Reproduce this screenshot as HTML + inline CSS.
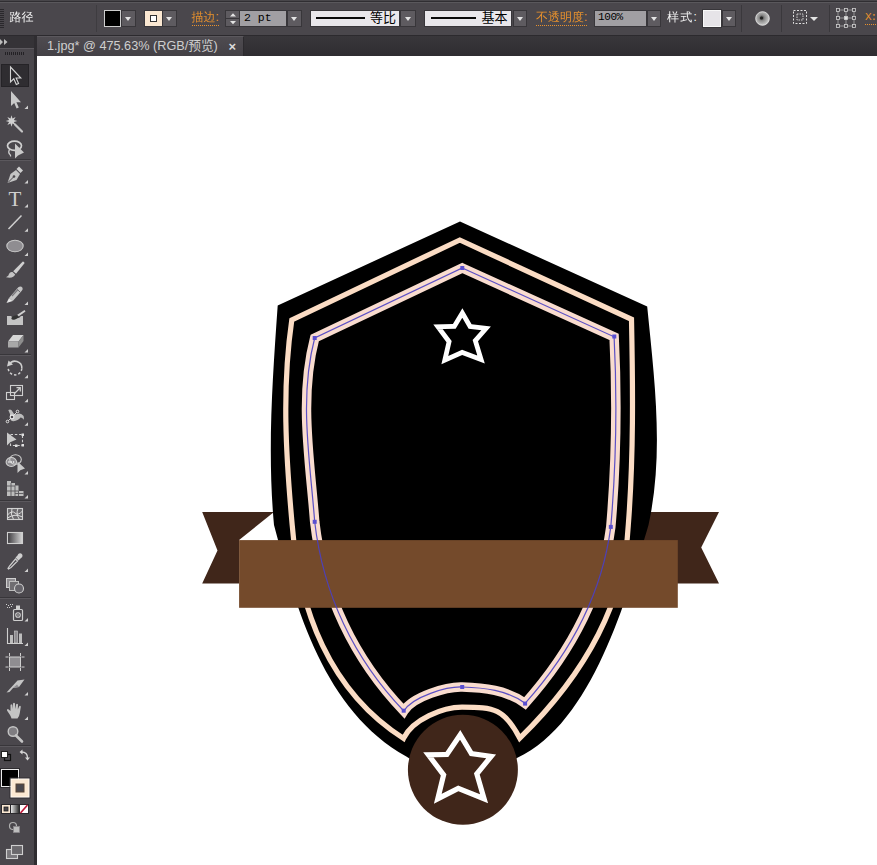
<!DOCTYPE html>
<html lang="zh-CN">
<head>
<meta charset="utf-8">
<title>1.jpg* @ 475.63% (RGB/预览)</title>
<style>
*{box-sizing:border-box;margin:0;padding:0}
html,body{width:877px;height:865px;overflow:hidden;background:#fff}
body{position:relative;font-family:"Liberation Sans","Noto Sans CJK SC",sans-serif;font-size:12px;color:#e6e6e6}
.abs{position:absolute}
#topbar{left:0;top:0;width:877px;height:36px;background:#4a474c;border-top:1px solid #48464a;border-bottom:1px solid #2c2a2e;box-shadow:inset 0 2px 0 -1px transparent}
#topline{left:0;top:1px;width:877px;height:2px;background:linear-gradient(#302e32 0 50%,#5a585c 50% 100%)}
#tabbar{left:36px;top:36px;width:841px;height:20px;background:linear-gradient(#39373b,#2f2d31)}
#tab{left:36px;top:36px;width:208px;height:20px;background:linear-gradient(#4e4b50,#444146);border-top:1px solid #5b585d;border-right:1px solid #2c2a2e;color:#cfcfcf;font-size:12.5px;line-height:19px;white-space:nowrap}
#toolbar{left:0;top:36px;width:34px;height:829px;background:#4a474c}
#toolsep{left:34px;top:36px;width:3px;height:829px;background:#2f2d31}
#toolhead{left:0;top:36px;width:34px;height:12px;background:#353337}
.lbl{position:absolute;white-space:nowrap;line-height:14px;font-family:"Liberation Sans","WenQuanYi Zen Hei",sans-serif}
.or{color:#e8912d}
.dd{position:absolute;background:#5e5b60;border:1px solid #38363a}
.dd:after{content:"";position:absolute;left:50%;top:50%;margin:-2px 0 0 -3.5px;border:3.5px solid transparent;border-top:4px solid #e4e4e4;border-bottom:0}
.box{position:absolute;border:1px solid #2e2c30}
</style>
</head>
<body>
<div id="topbar" class="abs"></div>
<div id="topline" class="abs"></div>
<div id="tabbar" class="abs"></div>
<div id="tab" class="abs"><span class="abs" id="tabtxt" style="left:11px;top:0;font-size:12.7px">1.jpg* @ 475.63% (RGB/预览)</span><span class="abs" style="left:192.500px;top:0px;font-size:13px;font-weight:bold;color:#dcdcdc">×</span></div>
<div class="abs" style="left:0;top:9px;width:4px;height:19px;background:repeating-linear-gradient(#2a282c 0 1px,#4a474c 1px 2px)"></div>
<div class="lbl" id="lujing" style="left:9.5px;top:10px;font-size:12px;color:#f2f2f2">路径</div>
<div class="abs" style="left:96px;top:5px;width:1px;height:27px;background:#3e3c40"></div>
<!-- fill swatch -->
<div class="box" style="left:104px;top:10px;width:17px;height:17px;background:#000;border:1px solid #cfcfcf"></div>
<div class="dd" style="left:121px;top:10px;width:15px;height:17px"></div>
<!-- stroke swatch -->
<div class="box" style="left:144px;top:10px;width:19px;height:17px;background:#fbe8d2;border:1px solid #3a383c"></div>
<div class="abs" style="left:150px;top:15px;width:7px;height:7px;background:#fff;border:1px solid #333"></div>
<div class="dd" style="left:162px;top:10px;width:15px;height:17px"></div>
<div class="lbl or" id="miaobian" style="left:191.5px;top:10px;border-bottom:1px dotted #e8912d;line-height:15px">描边:</div>
<!-- spinner -->
<div class="abs" style="left:225px;top:10px;width:15px;height:17px;background:#5e5b60;border:1px solid #38363a"></div>
<svg class="abs" style="left:225px;top:10px" width="15" height="17"><path d="M1 8.500 H14" stroke="#38363a" stroke-width="1"/><path d="M5 6.500 L8 3.200 L11 6.500Z M5 11 L8 14.300 L11 11Z" fill="#e4e4e4"/></svg>
<div class="abs" style="left:240px;top:10px;width:47px;height:17px;background:#a19fa3;border:1px solid #38363a;border-left:0;color:#000;font-family:'Liberation Mono',monospace;font-size:11.5px;line-height:14.5px;padding-left:4px">2 pt</div>
<div class="dd" style="left:287px;top:10px;width:15px;height:17px"></div>
<!-- profile -->
<div class="abs" style="left:310px;top:10px;width:90px;height:17px;background:#e9e7eb;border:1px solid #38363a"></div>
<div class="abs" style="left:316px;top:16.5px;width:49px;height:2.5px;background:#0a0a0a"></div>
<div class="lbl" style="left:370px;top:11px;color:#000;font-size:13px;font-family:'Liberation Sans','Noto Sans CJK SC',sans-serif">等比</div>
<div class="dd" style="left:400px;top:10px;width:16px;height:17px"></div>
<!-- brush -->
<div class="abs" style="left:424px;top:10px;width:88px;height:17px;background:#e9e7eb;border:1px solid #38363a"></div>
<div class="abs" style="left:431px;top:16.5px;width:45px;height:2.5px;background:#0a0a0a"></div>
<div class="lbl" style="left:481.5px;top:11px;color:#000;font-size:13px;font-family:'Liberation Sans','Noto Sans CJK SC',sans-serif">基本</div>
<div class="dd" style="left:513px;top:10px;width:14px;height:17px"></div>
<div class="lbl or" id="opac" style="left:536px;top:10px;border-bottom:1px dotted #e8912d;line-height:15px">不透明度:</div>
<div class="abs" style="left:594px;top:10px;width:53px;height:17px;background:#a19fa3;border:1px solid #38363a;color:#000;font-family:'Liberation Mono',monospace;font-size:11px;line-height:13.5px;padding-left:3px;letter-spacing:-0.4px">100%</div>
<div class="dd" style="left:647px;top:10px;width:14px;height:17px"></div>
<div class="lbl" id="yangshi" style="left:667px;top:10px;color:#f2f2f2;letter-spacing:1.3px">样式:</div>
<div class="abs" style="left:703px;top:10px;width:18px;height:17px;background:#e6e4e8;border:1px solid #f8f8f8;outline:1px solid #38363a"></div>
<div class="dd" style="left:722px;top:10px;width:14px;height:17px"></div>
<div class="abs" style="left:741px;top:5px;width:1px;height:27px;background:#3a383c"></div>
<svg class="abs" style="left:754px;top:10px" width="17" height="17" viewBox="0 0 17 17"><defs><radialGradient id="gl" cx="0.45" cy="0.45" r="0.6"><stop offset="0" stop-color="#333"/><stop offset="0.35" stop-color="#8a8a8a"/><stop offset="1" stop-color="#d6d6d6"/></radialGradient></defs><circle cx="8.5" cy="8.5" r="6.800" fill="url(#gl)" stroke="#e2e2e2" stroke-width="0.900"/><circle cx="7.5" cy="8" r="1.6" fill="#222"/></svg>
<div class="abs" style="left:781px;top:5px;width:1px;height:27px;background:#3a383c"></div><div class="abs" style="left:829px;top:5px;width:1px;height:27px;background:#3a383c"></div>
<svg class="abs" style="left:792px;top:9px" width="30" height="18" viewBox="0 0 30 18"><rect x="1.5" y="1.5" width="13" height="13" fill="none" stroke="#e0e0e0" stroke-width="1" stroke-dasharray="2 1.5"/><rect x="5" y="5" width="6" height="6" fill="none" stroke="#d0d0d0" stroke-width="1" stroke-dasharray="1.5 1"/><path d="M18 8 L26 8 L22 12Z" fill="#e4e4e4"/></svg>
<svg class="abs" style="left:835px;top:7px" width="22" height="22" viewBox="0 0 22 22"><g fill="none" stroke="#d0d0d0" stroke-width="0.8"><path d="M3 3H19V19H3Z M3 11H19 M11 3V19" stroke="#a8a8a8"/><g fill="#4a474c"><rect x="1.5" y="1.5" width="3" height="3"/><rect x="9.5" y="1.5" width="3" height="3"/><rect x="17.5" y="1.5" width="3" height="3"/><rect x="1.5" y="9.5" width="3" height="3"/><rect x="9.5" y="9.5" width="3" height="3" fill="#e0e0e0"/><rect x="17.5" y="9.5" width="3" height="3"/><rect x="1.5" y="17.5" width="3" height="3"/><rect x="9.5" y="17.5" width="3" height="3"/><rect x="17.5" y="17.5" width="3" height="3"/></g></g></svg>
<div class="lbl or" style="left:865px;top:11px;border-bottom:1px dotted #e8912d;line-height:13px;font-family:'Liberation Mono',monospace;font-size:11px;letter-spacing:-1px">X:</div>
<div id="toolbar" class="abs"></div>
<div id="toolsep" class="abs"></div>
<div id="toolhead" class="abs"></div>
<svg class="abs" style="left:0;top:0" width="37" height="865" viewBox="0 0 37 865">
<defs>
<linearGradient id="gr1" x1="0" x2="1"><stop offset="0" stop-color="#3a383c"/><stop offset="1" stop-color="#d8d8d8"/></linearGradient>
<linearGradient id="gr2" x1="0" x2="1"><stop offset="0" stop-color="#f4f4f4"/><stop offset="1" stop-color="#222"/></linearGradient>
</defs>
<!-- header arrows & grip -->
<path d="M0 39 L3 42 L0 45Z M4 39 L7.5 42 L4 45Z" fill="#bdbdbd"/>
<rect x="0" y="48" width="34" height="1" fill="#5d5a5f"/>
<g fill="#232125"><rect x="5" y="52" width="1" height="3"/><rect x="7" y="52" width="1" height="3"/><rect x="9" y="52" width="1" height="3"/><rect x="11" y="52" width="1" height="3"/><rect x="13" y="52" width="1" height="3"/><rect x="15" y="52" width="1" height="3"/><rect x="17" y="52" width="1" height="3"/><rect x="19" y="52" width="1" height="3"/><rect x="21" y="52" width="1" height="3"/><rect x="23" y="52" width="1" height="3"/></g>
<!-- separators -->
<g fill="#5b585d"><rect x="0" y="160" width="31" height="1"/><rect x="0" y="355" width="31" height="1"/><rect x="0" y="501" width="31" height="1"/><rect x="0" y="598" width="31" height="1"/><rect x="0" y="746" width="31" height="1"/></g>
<g fill="#38363a"><rect x="0" y="159" width="31" height="1"/><rect x="0" y="354" width="31" height="1"/><rect x="0" y="500" width="31" height="1"/><rect x="0" y="597" width="31" height="1"/><rect x="0" y="745" width="31" height="1"/></g>
<!-- 1 selection (active) -->
<rect x="1.5" y="64.5" width="27" height="22" fill="#2f2d31" stroke="#252327"/>
<path d="M10.5 67 L10.5 82 L13.8 78.8 L16.3 84.5 L18.6 83.5 L16.1 78 L20.8 78Z" fill="#2a282c" stroke="#d4d4d4" stroke-width="1.1" stroke-linejoin="miter"/>
<!-- 2 direct selection -->
<path d="M11 91 L11 106 L14.2 103 L16.6 108.5 L18.8 107.5 L16.4 102.2 L21 102.2Z" fill="#c9c9c9"/>
<path d="M28 109 v-3.5 l-3.5 3.5z" fill="#d0d0d0"/>
<!-- 3 magic wand -->
<polygon points="11.5,115.2 12.5,118.6 15.6,116.9 13.9,120.0 17.3,121.0 13.9,122.0 15.6,125.1 12.5,123.4 11.5,126.8 10.5,123.4 7.4,125.1 9.1,122.0 5.7,121.0 9.1,120.0 7.4,116.9 10.5,118.6" fill="#d0d0d0"/>
<path d="M15 124.500 L22 131.500" stroke="#c4c4c4" stroke-width="2.2" stroke-linecap="round"/>
<!-- 4 lasso -->
<ellipse cx="14.500" cy="145.800" rx="7" ry="4.600" fill="none" stroke="#cfcfcf" stroke-width="1.700"/>
<path d="M9.500 149.500 Q8 152 9.500 154 Q11 155 10.500 156.500" fill="none" stroke="#cfcfcf" stroke-width="1.300"/>
<path d="M15 143.500 L15 158.500 L18 155.500 L24 152.500Z" fill="#c9c9c9"/>
<!-- 5 pen -->
<path d="M19 166.5 L23 170.5 L20.5 173 L16.5 169Z" fill="#cfcfcf"/>
<path d="M16 170 L20 174 L16.5 180 L7.5 183 L10.5 174Z" fill="#c4c4c4"/>
<path d="M8 182.5 L13.5 177" stroke="#4a474c" stroke-width="1"/><circle cx="14" cy="176.5" r="1.3" fill="#4a474c"/>
<path d="M28 183.500 v-3.5 l-3.5 3.5z" fill="#d0d0d0"/>
<!-- 6 type -->
<text x="15" y="205.5" font-family="Liberation Serif, serif" font-size="21" fill="#cfcfcf" text-anchor="middle">T</text>
<path d="M28 207.500 v-3.5 l-3.5 3.5z" fill="#d0d0d0"/>
<!-- 7 line -->
<path d="M8.5 229 L21.5 215.5" stroke="#cfcfcf" stroke-width="1.5"/>
<path d="M28 231.700 v-3.5 l-3.5 3.5z" fill="#d0d0d0"/>
<!-- 8 ellipse -->
<ellipse cx="15" cy="246" rx="8.2" ry="5.8" fill="#8f8d91" stroke="#c9c9c9" stroke-width="1.1"/>
<path d="M28 256 v-3.5 l-3.5 3.5z" fill="#d0d0d0"/>
<!-- 9 brush -->
<path d="M22.800 261.500 Q24.500 261.500 24.500 263.300 L16 273.800 L13.200 271.300Z" fill="#cfcfcf"/>
<path d="M12.500 272 L15.200 274.600 Q13.500 278.800 6 277.300 Q9 276 9 274 Q10 271.500 12.500 272Z" fill="#c4c4c4"/>
<!-- 10 pencil -->
<path d="M18.300 287.300 Q20.800 285.300 22.500 287.800 Q23.200 289.500 21.800 290.800 L12.800 301 L9 298Z" fill="#c4c4c4"/>
<path d="M9 298 L12.800 301 L6.500 303Z" fill="#e4e4e4"/>
<path d="M16.800 289 L20.300 292.300" stroke="#6a686c" stroke-width="1"/>
<path d="M12 296 L18 289.500" stroke="#7a787c" stroke-width="1.200"/>
<path d="M28 305 v-3.5 l-3.5 3.5z" fill="#d0d0d0"/>
<!-- 11 blob brush -->
<path d="M7 316 H11 L13 318 H19 L21 316 H23 V325 H7Z" fill="#c4c4c4"/>
<path d="M24.5 310 L25.5 311.5 L18.5 316.5 L17 315Z" fill="#cfcfcf"/>
<ellipse cx="15" cy="317.5" rx="3.8" ry="1.8" fill="#333" transform="rotate(-20 15 317.5)"/>
<!-- 12 eraser -->
<path d="M13 335 L23.5 335 L18.5 341.5 L8 341.5Z" fill="#d6d6d6"/>
<path d="M8 341.5 L18.5 341.5 L18.5 347.5 L8 347.5Z" fill="#a8a8a8"/>
<path d="M18.5 341.5 L23.5 335 L23.5 341 L18.5 347.5Z" fill="#8d8d8d"/>
<path d="M28 352.500 v-3.5 l-3.5 3.5z" fill="#d0d0d0"/>
<!-- 13 rotate -->
<path d="M9.200 364.500 A6.800 6.800 0 0 1 21.800 368.500" fill="none" stroke="#cfcfcf" stroke-width="1.500"/>
<path d="M21.800 368.500 A6.800 6.800 0 1 1 8.300 367" fill="none" stroke="#cfcfcf" stroke-width="1.500" stroke-dasharray="2.400 2"/>
<path d="M7 366.500 L8.500 360.500 L13 364.500Z" fill="#cfcfcf"/>
<path d="M28 378.300 v-3.5 l-3.5 3.5z" fill="#d0d0d0"/>
<!-- 14 scale -->
<rect x="6.5" y="392.5" width="8" height="7" fill="none" stroke="#cfcfcf" stroke-width="1.1"/>
<rect x="10.500" y="385.5" width="12" height="10" fill="none" stroke="#cfcfcf" stroke-width="1.1"/>
<path d="M14 394 L20 388 M16.5 387.7 L20.3 387.7 L20.3 391.5" fill="none" stroke="#cfcfcf" stroke-width="1.2"/>
<path d="M28 402.300 v-3.5 l-3.5 3.5z" fill="#d0d0d0"/>
<!-- 15 width tool -->
<path d="M8.300 410 Q11.300 408.300 12.800 412 Q14 415 17 414 Q21 412.300 23.600 416 Q24.300 418 23.600 419.800 Q22.500 417.600 20.500 417.600 Q18 420.800 13.500 421.200 Q10 421 10.200 418 Q10.500 413.500 8.300 410Z" fill="#bdbdbd"/>
<path d="M7.500 421.500 L17.500 411.500" stroke="#e6e6e6" stroke-width="0.900"/>
<circle cx="12" cy="417" r="1.900" fill="#4a474c" stroke="#ececec" stroke-width="1.100"/>
<circle cx="17.500" cy="411.500" r="1.300" fill="#4a474c" stroke="#ececec" stroke-width="0.900"/>
<circle cx="7.500" cy="421.500" r="1.300" fill="#4a474c" stroke="#ececec" stroke-width="0.900"/>
<path d="M28 425.800 v-3.5 l-3.5 3.5z" fill="#d0d0d0"/>
<!-- 16 free transform -->
<rect x="10.500" y="434.500" width="12" height="11" fill="none" stroke="#cfcfcf" stroke-width="1.1" stroke-dasharray="2.500 1.800"/>
<path d="M7 432.500 L7 445.500 L10.200 442.300 L16.500 439.500Z" fill="#c9c9c9"/>
<g fill="#e0e0e0"><rect x="21.500" y="433.500" width="2.500" height="2.500"/><rect x="21.500" y="444" width="2.500" height="2.500"/><rect x="15" y="444.500" width="2.500" height="2.500"/></g>
<!-- 17 shape builder -->
<ellipse cx="11.300" cy="462" rx="5.200" ry="4.500" fill="#8f8d91" stroke="#cfcfcf" stroke-width="1.100"/>
<ellipse cx="15.500" cy="459.500" rx="5.800" ry="4.800" fill="none" stroke="#cfcfcf" stroke-width="1.100"/>
<path d="M8.300 462 H15" stroke="#f4f4f4" stroke-width="1.400" stroke-dasharray="1.300 1"/>
<path d="M17.500 461.500 L17.500 473 L20.300 470.200 L25 468.500Z" fill="#c9c9c9"/>
<path d="M28 474.500 v-3.5 l-3.5 3.5z" fill="#d0d0d0"/>
<!-- 18 perspective grid -->
<path d="M7 481 H11 V483 H15 V485.500 H18.500 V491 H23.500 V496 H7Z" fill="#bdbdbd"/>
<path d="M11 483 V496 M15 485.500 V496 M18.500 491 V496 M7 486 H15 M7 491 H18.500 M15 493.500 H23.500" stroke="#5a585c" stroke-width="0.900" fill="none"/>
<path d="M28 498.500 v-3.5 l-3.5 3.5z" fill="#d0d0d0"/>
<!-- 19 mesh -->
<rect x="7.500" y="508.500" width="15" height="11" fill="#6b696d" stroke="#cfcfcf" stroke-width="1.1"/>
<path d="M7.500 515 Q12 510 15 513 Q18 516 22.500 511 M12 508.500 Q10 514 13.500 519.500 M18 508.500 Q15.500 514 19.500 519.500 M7.500 518 Q15 513 22.500 517" fill="none" stroke="#dcdcdc" stroke-width="1"/>
<!-- 20 gradient -->
<rect x="7.500" y="532.500" width="15" height="11" fill="url(#gr1)" stroke="#cfcfcf" stroke-width="1.1"/>
<!-- 21 eyedropper -->
<path d="M19 553.500 Q21.500 552.500 22.500 555 Q23 557 20.500 558.500 L18.500 560.500 L15.500 557.500 L17.500 555.500Q18 554 19 553.500Z" fill="#cfcfcf"/>
<path d="M15.500 559 L17.500 561 L11 567.500 L8.500 569 L8 568.500 L9.500 566Z" fill="none" stroke="#cfcfcf" stroke-width="1.200"/>
<path d="M28 572 v-3.5 l-3.5 3.5z" fill="#d0d0d0"/>
<!-- 22 blend -->
<rect x="6.500" y="578.500" width="9" height="9" fill="#8f8d91" stroke="#cfcfcf"/>
<rect x="9.500" y="581.500" width="9" height="9" fill="#6f6d71" stroke="#bdbdbd"/>
<circle cx="19" cy="588.500" r="4.500" fill="#66646a" stroke="#cfcfcf" stroke-width="1.100"/>
<!-- 23 symbol sprayer -->
<rect x="13.500" y="609.500" width="9" height="11" rx="1" fill="none" stroke="#cfcfcf" stroke-width="1.200"/>
<rect x="16" y="605.500" width="4" height="3.500" fill="#cfcfcf"/>
<circle cx="18" cy="615" r="2.300" fill="none" stroke="#cfcfcf" stroke-width="1.100"/><circle cx="18" cy="615" r="0.800" fill="#cfcfcf"/>
<g fill="#cfcfcf"><rect x="6" y="604" width="1" height="1"/><rect x="8" y="605" width="1" height="1"/><rect x="10" y="604" width="1" height="1"/><rect x="7" y="607" width="1" height="1"/><rect x="9" y="607" width="1" height="1"/><rect x="11" y="606" width="1" height="1"/><rect x="12" y="604" width="1" height="1"/></g>
<path d="M28 621.500 v-3.5 l-3.5 3.5z" fill="#d0d0d0"/>
<!-- 24 graph -->
<path d="M7.500 628 V643.500 H23" fill="none" stroke="#cfcfcf" stroke-width="1.100"/>
<rect x="10" y="635" width="3" height="8" fill="#bdbdbd"/><rect x="14.500" y="631" width="3" height="12" fill="#8f8d91" stroke="#cfcfcf" stroke-width="0.600"/><rect x="19" y="633.500" width="3" height="9.500" fill="#bdbdbd"/>
<path d="M28 646 v-3.5 l-3.5 3.5z" fill="#d0d0d0"/>
<!-- 25 artboard -->
<rect x="9.500" y="657" width="11" height="10" fill="#8f8d91" stroke="#cfcfcf" stroke-width="1"/>
<path d="M9.500 653 V656 M20.500 653 V656 M9.500 668 V671 M20.500 668 V671 M5.500 657 H8.500 M5.500 667 H8.500 M21.500 657 H24.500 M21.500 667 H24.500" stroke="#cfcfcf" stroke-width="1"/>
<!-- 26 slice -->
<path d="M24.500 679.500 L17.500 680.500 L6.500 692.500 L9.500 692 L13 688 L19 687Z" fill="#c4c4c4"/>
<path d="M13 688 L19 687 L17 684.500Z" fill="#8f8d91"/>
<path d="M28 695.400 v-3.5 l-3.5 3.5z" fill="#d0d0d0"/>
<!-- 27 hand -->
<path d="M10 715 L7 710.500 Q6.500 709 8 709 L10.500 711 L10.500 705 Q11.300 703.500 12.200 705 L12.500 709 L13 703.500 Q14 702 15 703.500 L15.200 709 L16.200 704.200 Q17.200 703 18 704.500 L17.800 709.500 L19.200 706.200 Q20.400 705.300 20.800 706.800 L19.800 713 Q19.500 716 17.500 718.500 L11.500 718.500 Q11 716.500 10 715Z" fill="#c4c4c4"/>
<path d="M28 720 v-3.5 l-3.5 3.5z" fill="#d0d0d0"/>
<!-- 28 zoom -->
<circle cx="13" cy="731.500" r="4.800" fill="#7f7d81" stroke="#c4c4c4" stroke-width="1.400"/>
<path d="M16 735.500 L22 741.500" stroke="#c4c4c4" stroke-width="2.600" stroke-linecap="round"/>
<!-- default colors / swap -->
<rect x="4.500" y="754.500" width="6" height="6" fill="#4a474c" stroke="#111" stroke-width="1.200"/>
<rect x="1.500" y="751.500" width="6" height="6" fill="#fff" stroke="#222" stroke-width="1"/>
<path d="M21.500 752 Q27.500 752 27.500 758" fill="none" stroke="#d6d6d6" stroke-width="1.300"/>
<path d="M19.500 752 L22.500 749.500 L22.500 754.500Z M27.500 760.500 L25 757.500 L30 757.500Z" fill="#d6d6d6"/>
<!-- fill & stroke -->
<rect x="1.500" y="769.500" width="17" height="17" fill="#000" stroke="#ececec" stroke-width="1"/>
<rect x="0.500" y="768.500" width="19" height="19" fill="none" stroke="#2e2c30" stroke-width="1"/>
<rect x="10" y="778" width="20" height="20" fill="none" stroke="#2e2c30" stroke-width="1"/><rect x="11" y="779" width="18" height="18" fill="#fbe8d2" stroke="#fffaf2" stroke-width="1"/>
<rect x="16" y="784" width="8" height="8" fill="#4a474c" stroke="#5a4636" stroke-width="1"/>
<!-- color mode -->
<rect x="1.500" y="804.500" width="9" height="9" fill="#fbe8d2" stroke="#2a282c"/><rect x="4" y="807" width="4" height="4" fill="#4a474c" stroke="#222" stroke-width="0.800"/>
<rect x="10.500" y="804.500" width="9" height="9" fill="url(#gr2)" stroke="#2a282c"/>
<rect x="19.500" y="804.500" width="9" height="9" fill="#fff" stroke="#2a282c"/><path d="M20.500 813 L27.500 805" stroke="#c01838" stroke-width="1.700"/>
<!-- draw mode -->
<circle cx="13" cy="826" r="3.500" fill="none" stroke="#b0b0b0" stroke-width="1.200"/>
<rect x="13.500" y="826.500" width="6" height="6" fill="#bdbdbd" stroke="#8a888c" stroke-width="0.800"/>
<!-- screen mode -->
<rect x="6.500" y="849.500" width="11" height="9" fill="#7a787c" stroke="#cfcfcf" stroke-width="1.100"/>
<rect x="11.500" y="845.500" width="11" height="9" fill="#6a686c" stroke="#cfcfcf" stroke-width="1.100"/>
</svg>
<svg class="abs" style="left:0;top:0" width="877" height="865" viewBox="0 0 877 865">
<defs><clipPath id="c1"><polygon points="462.4,308.3 471.6,324.3 490.9,326.6 478.0,341.2 484.8,363.6 462.2,354.9 441.4,364.3 446.5,342.2 433.3,324.5 452.9,324.0"/></clipPath><clipPath id="c2"><polygon points="460.3,730.1 473.0,751.2 496.1,754.4 479.7,774.5 488.1,803.2 458.4,791.2 433.9,803.7 440.8,775.5 423.2,752.3 445.5,751.9"/></clipPath><clipPath id="cv"><rect x="37" y="56" width="840" height="809"/></clipPath></defs>
<g clip-path="url(#cv)">
<polygon points="202.2,512 274,512 239.1,540.1 239.1,583.4 202.2,583.4 217.5,550.5" fill="#40261a"/>
<polygon points="719,512 630,512 630,583.4 719,583.4 701.2,547.5" fill="#40261a"/>
<path d="M460.0 221.5 L647.2 306.5 C654.3 378.7 664.3 453.1 648.5 525.0 C627.2 596.9 592.5 723.0 517.4 757.8 L462.0 792.0 L406.3 756.5 C324.3 710.5 296.5 609.9 274.0 525.0 C267.2 452.0 272.6 378.1 277.7 305.4 Z" fill="#000"/>
<path d="M459.8 240.0 L631.5 319.3 C632.9 388.0 633.6 456.2 628.3 525.0 C623.9 609.1 578.2 680.9 519.8 738.2 C504.3 708.8 494.7 707.2 462.0 707.2 C443.1 707.2 412.5 719.3 403.5 738.4 C329.2 691.2 298.8 608.8 292.2 525.0 C285.9 455.8 281.8 388.6 291.8 319.9 Z" fill="none" stroke="#fbdcc4" stroke-width="5.2" stroke-linejoin="miter"/>
<path d="M462.3 268.0 L614.1 336.8 C617.3 400.1 616.2 463.7 610.8 526.9 C601.8 594.7 569.6 653.6 525.1 703.3 C507.0 690.1 483.7 687.6 462.2 687.0 C446.8 686.5 412.8 696.5 403.8 711.0 C354.0 659.0 323.0 594.2 314.7 521.8 C310.1 460.4 298.8 398.8 314.7 338.0 Z" fill="none" stroke="#f9dccf" stroke-width="9.5" stroke-linejoin="miter"/>
<polygon points="462.4,308.3 471.6,324.3 490.9,326.6 478.0,341.2 484.8,363.6 462.2,354.9 441.4,364.3 446.5,342.2 433.3,324.5 452.9,324.0" fill="#000" stroke="#fff" stroke-width="9.6" stroke-linejoin="miter" stroke-miterlimit="10" clip-path="url(#c1)"/>
<circle cx="462.9" cy="769.8" r="55" fill="#40261a"/>
<polygon points="460.3,730.1 473.0,751.2 496.1,754.4 479.7,774.5 488.1,803.2 458.4,791.2 433.9,803.7 440.8,775.5 423.2,752.3 445.5,751.9" fill="#40261a" stroke="#fff" stroke-width="10.4" stroke-linejoin="miter" stroke-miterlimit="10" clip-path="url(#c2)"/>
<rect x="239.1" y="540.1" width="438.7" height="67.7" fill="#744a2b"/>
<path d="M462.3 268.0 L614.1 336.8 C617.3 400.1 616.2 463.7 610.8 526.9 C601.8 594.7 569.6 653.6 525.1 703.3 C507.0 690.1 483.7 687.6 462.2 687.0 C446.8 686.5 412.8 696.5 403.8 711.0 C354.0 659.0 323.0 594.2 314.7 521.8 C310.1 460.4 298.8 398.8 314.7 338.0 Z" fill="none" stroke="#4a40c4" stroke-width="1.2" opacity="0.9"/>
<g fill="#5a4fd0"><rect x="460.3" y="266" width="4" height="4"/><rect x="312.7" y="336" width="4" height="4"/><rect x="612.3" y="334.5" width="4" height="4"/><rect x="312.7" y="519.8" width="4" height="4"/><rect x="608.8" y="524.9" width="4" height="4"/><rect x="401.7" y="708.7" width="4" height="4"/><rect x="460.2" y="685" width="4" height="4"/><rect x="523.1" y="701.6" width="4" height="4"/></g>
</g>
</svg>

</body>
</html>
